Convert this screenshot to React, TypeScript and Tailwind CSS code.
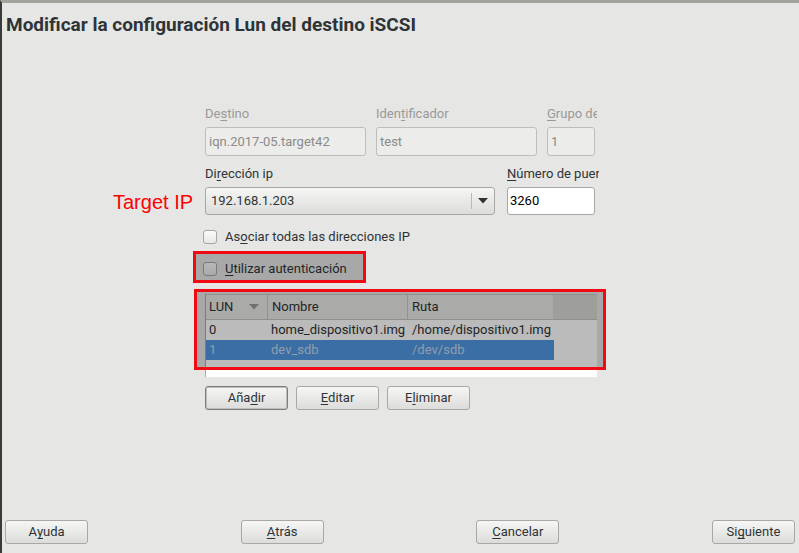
import React from "react";

const F = { fontFamily: "Roboto, 'Noto Sans', sans-serif" };

function U({ children }: { children: React.ReactNode }) {
  return <span className="underline underline-offset-[2px] decoration-1">{children}</span>;
}

function Btn({ children, focus = false }: { children: React.ReactNode; focus?: boolean }) {
  return (
    <div
      className={`w-[83px] h-[24px] rounded-[3px] border flex items-center justify-center text-[13px] text-[#2e3436] bg-gradient-to-b from-[#f6f6f5] to-[#dcdcda] ${
        focus ? "border-[#7d7d7b] shadow-[inset_0_0_0_1px_#bdbdbb]" : "border-[#a8a8a6]"
      }`}
    >
      {children}
    </div>
  );
}

function Check({ children }: { children: React.ReactNode }) {
  return (
    <div className="flex items-center h-[20px] gap-[8px] -ml-[2px]">
      <div className="w-[14px] h-[14px] rounded-[3px] border border-[#a6a6a4] bg-gradient-to-b from-[#fbfbfb] to-[#e8e8e6]" />
      <span className="text-[13px] text-[#2e3436]">{children}</span>
    </div>
  );
}

export default function App() {
  return (
    <div
      style={F}
      className="w-[799px] h-[553px] bg-[#e6e6e5] border-l-2 border-l-[#3a3a3a] border-t-[3px] border-t-[#a2a39d] flex flex-col overflow-hidden"
    >
      <div className="pl-[4px] pt-[10px] text-[19px] leading-[24px] font-bold text-[#2e3436]">
        Modificar la configuración Lun del destino iSCSI
      </div>

      <div className="ml-[203px] mt-[69px] flex flex-col">
        {/* Row 1 */}
        <div className="w-[392px] overflow-hidden">
          <div className="flex gap-[10px] w-[420px]">
            <div className="flex flex-col gap-[5px] w-[161px] shrink-0">
              <span className="text-[13px] leading-[16px] text-[#9a9a98]">
                De<U>s</U>tino
              </span>
              <div className="h-[29px] rounded-[3px] border border-[#bdbdbb] bg-[#ececeb] flex items-center px-[3px] text-[13px] text-[#8b8b89]">
                iqn.2017-05.target42
              </div>
            </div>
            <div className="flex flex-col gap-[5px] w-[161px] shrink-0">
              <span className="text-[13px] leading-[16px] text-[#9a9a98]">
                Iden<U>t</U>ificador
              </span>
              <div className="h-[29px] rounded-[3px] border border-[#bdbdbb] bg-[#ececeb] flex items-center px-[3px] text-[13px] text-[#8b8b89]">
                test
              </div>
            </div>
            <div className="flex flex-col gap-[5px] w-[60px] shrink-0">
              <span className="text-[13px] leading-[16px] text-[#9a9a98] whitespace-nowrap">
                <U>G</U>rupo de
              </span>
              <div className="h-[29px] w-[48px] rounded-[3px] border border-[#bdbdbb] bg-[#ececeb] flex items-center px-[3px] text-[13px] text-[#8b8b89]">
                1
              </div>
            </div>
          </div>
        </div>

        {/* Row 2 */}
        <div className="mt-[10px]">
          <div className="flex gap-[12px] relative">
            <div
              className="absolute -left-[92px] top-[26px] text-[20px] leading-[20px] text-[#ff0000]"
              style={{ fontFamily: "'Liberation Sans', Arial, sans-serif" }}
            >
              Target IP
            </div>
            <div className="flex flex-col gap-[5px] w-[290px] shrink-0">
              <span className="text-[13px] leading-[16px] text-[#2e3436]">
                Di<U>r</U>ección ip
              </span>
              <div className="h-[28px] rounded-[3px] border border-[#a8a8a6] bg-gradient-to-b from-[#f6f6f5] to-[#dcdcda] flex items-center text-[13px] text-[#2e3436]">
                <span className="flex-1 pl-[5px]">192.168.1.203</span>
                <div className="w-px h-[16px] bg-[#b8b8b6]" />
                <div className="w-[22px] flex items-center justify-center">
                  <svg width="10" height="6" viewBox="0 0 10 6">
                    <path d="M0 0 L10 0 L5 5.5 Z" fill="#2e3436" />
                  </svg>
                </div>
              </div>
            </div>
            <div className="w-[88px] shrink-0 flex flex-col gap-[5px]">
              <div className="w-[92px] overflow-hidden">
                <span className="text-[13px] leading-[16px] text-[#2e3436] whitespace-nowrap block">
                  <U>N</U>úmero de puer
                </span>
              </div>
              <div className="h-[28px] w-[88px] rounded-[3px] border border-[#a8a8a6] bg-white flex items-center px-[2px] text-[13px] text-black">
                3260
              </div>
            </div>
          </div>
        </div>

        <div className="mt-[12px]">
          <Check>
            As<U>o</U>ciar todas las direcciones IP
          </Check>
        </div>

        <div className="mt-[12px] relative">
          <Check>
            <U>U</U>tilizar autenticación
          </Check>
          <div className="absolute -left-[12px] top-[-8px] w-[173px] h-[32px] border-[3px] border-[#f00a14] bg-black/[0.265] pointer-events-none" />
        </div>

        {/* Table */}
        <div className="mt-[15px] relative w-[392px] h-[83px] bg-white border-l border-[#a8a8a6] text-[13px] text-[#2e3436]">
          <div className="flex h-[26px] border-y border-[#c4c4c2] bg-[#e8e8e6]">
            <div className="w-[62px] flex items-center justify-between pl-[3px] pr-[8px] border-r border-[#c8c8c6]">
              <span>LUN</span>
              <svg width="10" height="6" viewBox="0 0 10 6">
                <path d="M0 0 L10 0 L5 5.5 Z" fill="#9a9a98" />
              </svg>
            </div>
            <div className="w-[140px] flex items-center pl-[4px] border-r border-[#c8c8c6]">Nombre</div>
            <div className="w-[145px] flex items-center pl-[4px]">Ruta</div>
            <div className="flex-1 bg-[#d8d8d6]" />
          </div>
          <div className="flex h-[20px] items-center">
            <div className="w-[62px] pl-[3px]">0</div>
            <div className="w-[140px] pl-[3px] whitespace-nowrap">home_dispositivo1.img</div>
            <div className="w-[145px] pl-[4px] whitespace-nowrap">/home/dispositivo1.img</div>
          </div>
          <div className="flex h-[20px] items-center w-[348px] bg-[#4f96e0] text-[#c3d6ee]">
            <div className="w-[62px] pl-[3px]">1</div>
            <div className="w-[140px] pl-[3px]">dev_sdb</div>
            <div className="w-[145px] pl-[4px]">/dev/sdb</div>
          </div>
          <div className="absolute -left-[12px] -top-[5px] w-[412px] h-[81px] border-[3px] border-[#f00a14] bg-black/[0.265] pointer-events-none" />
        </div>

        <div className="flex gap-[8px] mt-[9px]">
          <Btn focus>
            Aña<U>d</U>ir
          </Btn>
          <Btn>
            <U>E</U>ditar
          </Btn>
          <Btn>
            E<U>l</U>iminar
          </Btn>
        </div>
      </div>

      <div className="mt-auto mb-[9px] pl-[3px] pr-[4px] flex justify-between">
        <Btn>
          A<U>y</U>uda
        </Btn>
        <Btn>
          <U>A</U>trás
        </Btn>
        <Btn>
          <U>C</U>ancelar
        </Btn>
        <Btn>
          Si<U>g</U>uiente
        </Btn>
      </div>
    </div>
  );
}
